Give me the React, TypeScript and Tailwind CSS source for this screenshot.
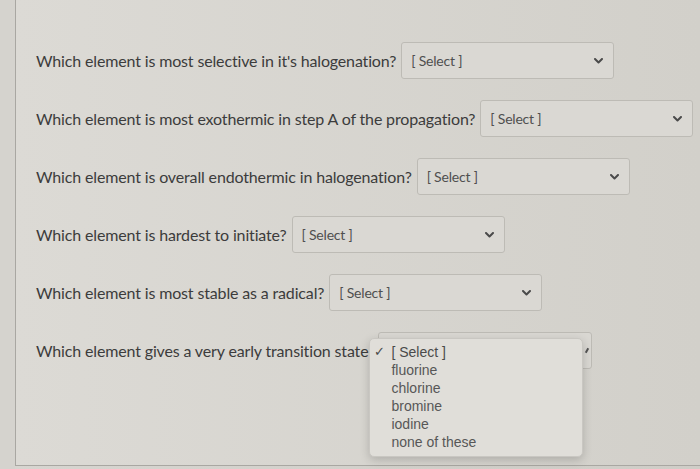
import React from 'react';

const questions = [
  'Which element is most selective in it\'s halogenation?',
  'Which element is most exothermic in step A of the propagation?',
  'Which element is overall endothermic in halogenation?',
  'Which element is hardest to initiate?',
  'Which element is most stable as a radical?',
];

const options = ['fluorine', 'chlorine', 'bromine', 'iodine', 'none of these'];

// Small bold chevron used at the right end of every select
const Chevron = () => (
  <svg width="9" height="6" viewBox="0 0 9 6" className="shrink-0">
    <path d="M1 1 L4.5 4.5 L8 1" fill="none" stroke="#4a4a4a" strokeWidth="2" strokeLinecap="round" strokeLinejoin="round" />
  </svg>
);

const SelectBox = () => (
  <div className="ml-[5px] flex h-[37px] w-[213px] shrink-0 items-center justify-between rounded-[3px] border border-[#bdbbb5] bg-[#dad8d3] pl-[9px] pr-[10px]">
    <span className="text-[14px] tracking-[-0.2px] text-[#4f4f4f]">[ Select ]</span>
    <Chevron />
  </div>
);

const App: React.FC = () => {
  return (
    <div
      className="flex h-[469px] w-[700px] overflow-hidden bg-gradient-to-r from-[#d7d5d0] to-[#cfcdc7]"
      style={{ fontFamily: 'Lato, "Open Sans", sans-serif' }}
    >
      {/* Left gutter strip */}
      <div className="w-[15px] shrink-0 bg-[#d5d3ce]" />

      {/* Question panel */}
      <div className="flex h-[466px] flex-1 flex-col gap-[21px] border-b border-l border-[#a9a7a2] bg-gradient-to-r from-[#dcdad5] to-[#d2d0ca] pl-[20px] pt-[42px]">
        {questions.map((q) => (
          <div key={q} className="flex items-center">
            <span className="text-[16px] tracking-[-0.15px] text-[#3c3c3c]">{q}</span>
            <SelectBox />
          </div>
        ))}

        {/* Last question with open dropdown */}
        <div className="flex items-center">
          <span className="text-[16px] tracking-[-0.15px] text-[#3c3c3c]">
            Which element gives a very early transition state
          </span>
          <div className="ml-[10px]">
            <div className="relative flex h-[37px] w-[214px] items-center justify-end rounded-[3px] border border-[#bdbbb5] bg-[#d9d7d2] pr-[3px]">
              <span className="block h-[5px] w-[2px] rotate-[30deg] bg-[#555]" />
              <div
                className="absolute left-[-10px] top-[5px] w-[214px] rounded-[5px] border border-[#c9c7c2] bg-[#e0ded9] pb-[5px] pt-[4px] shadow-[0_3px_10px_rgba(0,0,0,0.18)]"
                style={{ fontFamily: '"Liberation Sans", Arial, sans-serif' }}
              >
                <div className="flex h-[18px] items-center text-[14px] text-[#4a4a4a]">
                  <span className="w-[21px] pl-[4px] text-[13px]">✓</span>
                  <span>[ Select ]</span>
                </div>
                {options.map((o) => (
                  <div key={o} className="flex h-[18px] items-center pl-[21px] text-[14px] text-[#575757]">
                    {o}
                  </div>
                ))}
              </div>
            </div>
          </div>
        </div>
      </div>
    </div>
  );
};

export default App;
